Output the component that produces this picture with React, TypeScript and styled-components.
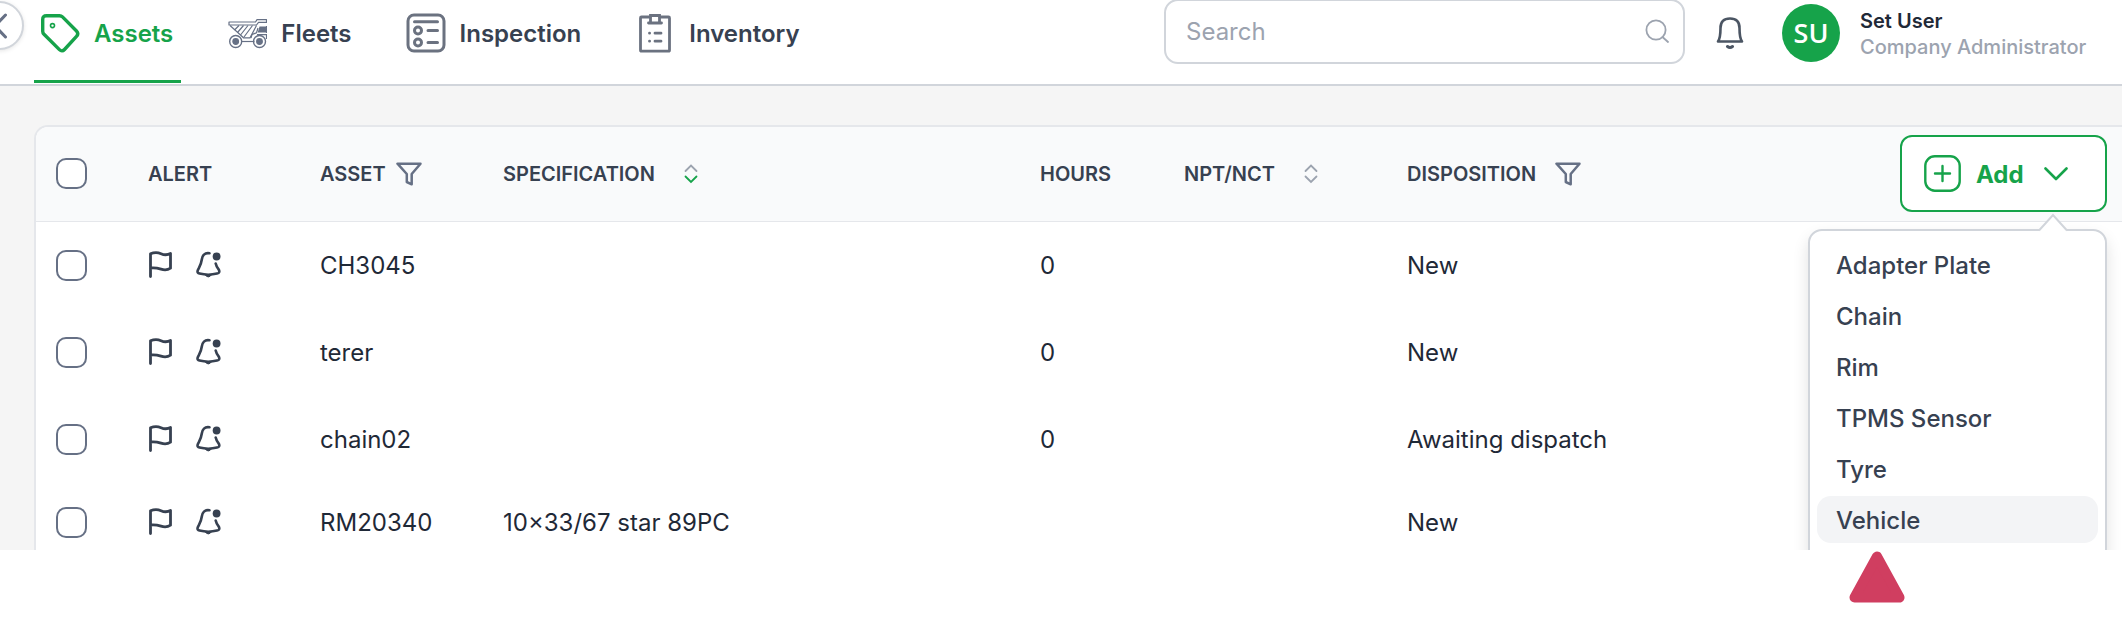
import React from "react";
import styled, { createGlobalStyle } from "styled-components";

const color = {
  green: "#16a34a",
  ink: "#1f2937",
  text: "#374151",
  icon: "#667085",
  muted: "#9ca3af",
  line: "#d1d5db",
  softLine: "#e5e7eb",
};

const GlobalStyle = createGlobalStyle`
  * { box-sizing: border-box; }
  body {
    margin: 0;
    background: #fff;
    color: ${color.ink};
    font-family: Inter, "Liberation Sans", sans-serif;
    font-size: 24px;
    line-height: 32px;
    overflow-x: hidden;
  }
  button, input { font: inherit; color: inherit; }
`;

/* ---------- top bar ---------- */

const TopBar = styled.header`
  position: relative;
  display: flex;
  align-items: flex-start;
  justify-content: space-between;
  height: 86px;
  padding: 0 31px 0 34px;
  border-bottom: 2px solid ${color.line};
  background: #fff;
`;

const BackButton = styled.button`
  position: absolute;
  top: 1px;
  left: -25px;
  width: 49px;
  height: 49px;
  padding: 0;
  display: grid;
  place-items: center;
  border: 2px solid ${color.line};
  border-radius: 50%;
  background: #fff;
  box-shadow: 0 1px 4px rgba(0, 0, 0, 0.1);
  svg { display: block; }
`;

const Nav = styled.nav`
  display: flex;
  gap: 40px;
`;

const Tab = styled.a<{ $active?: boolean }>`
  display: flex;
  align-items: center;
  gap: 14px;
  height: 83px;
  padding: 0 8px 14px 6px;
  border-bottom: 3px solid ${(p) => (p.$active ? color.green : "transparent")};
  color: ${(p) => (p.$active ? color.green : color.text)};
  font-weight: 600;
  text-decoration: none;
  svg { display: block; flex: none; }
  span { padding-top: 2px; }
`;

const Tools = styled.div`
  display: flex;
  align-items: center;
  height: 66px;
`;

const SearchBox = styled.label`
  display: flex;
  align-items: center;
  width: 521px;
  height: 65px;
  margin: -4px 31px 0 0;
  padding: 0 14px 0 20px;
  border: 2px solid ${color.line};
  border-radius: 14px;
  background: #fff;
`;

const SearchInput = styled.input`
  flex: 1;
  min-width: 0;
  padding: 1px 0 0;
  border: 0;
  outline: 0;
  background: transparent;
  &::placeholder { color: ${color.muted}; opacity: 1; }
`;

const IconButton = styled.button`
  display: inline-grid;
  place-items: center;
  padding: 0;
  border: 0;
  background: transparent;
  svg { display: block; }
`;

const Avatar = styled.div`
  display: grid;
  place-items: center;
  width: 58px;
  height: 58px;
  margin: 0 20px 0 38px;
  border-radius: 50%;
  background: ${color.green};
  color: #fff;
  font: 600 27px/32px "Open Sans", sans-serif;
`;

const UserText = styled.div`
  min-width: 231px;
  padding-top: 2px;
  font-size: 20px;
  line-height: 26px;
  font-weight: 500;
  color: ${color.muted};
  strong {
    display: block;
    font-weight: 600;
    color: ${color.ink};
  }
`;

/* ---------- asset table ---------- */

const Workspace = styled.main`
  padding: 39px 0 0 34px;
  background: #f5f5f5;
  overflow: hidden;
`;

const Card = styled.section`
  border: 2px solid ${color.softLine};
  border-width: 2px 0 0 2px;
  border-radius: 14px 0 0 0;
  background: #fff;
`;

const Table = styled.table`
  width: 100%;
  table-layout: fixed;
  border-spacing: 0;
`;

const Col = styled.col<{ $width?: number }>`
  width: ${(p) => (p.$width ? `${p.$width}px` : "auto")};
`;

const HeadCell = styled.th`
  height: 95px;
  padding: 0 0 1px;
  border-bottom: 1px solid ${color.softLine};
  background: #f9fafb;
  color: ${color.text};
  font-size: 20px;
  font-weight: 600;
  text-align: left;
  &:first-child {
    padding-left: 20px;
    border-radius: 12px 0 0 0;
  }
`;

const HeadLabel = styled.div<{ $gap?: number }>`
  display: flex;
  align-items: center;
  gap: ${(p) => p.$gap ?? 0}px;
`;

const Cell = styled.td`
  padding: 28px 0;
  line-height: 31px;
  vertical-align: top;
  &:first-child { padding-left: 20px; }
  tr:last-child > & {
    padding-top: 24px;
    padding-bottom: 12px;
  }
`;

const Checkbox = styled.input.attrs({ type: "checkbox" })`
  appearance: none;
  display: block;
  width: 31px;
  height: 31px;
  margin: 0;
  border: 2px solid ${color.icon};
  border-radius: 10px;
  background: #fff;
  &:checked { background: ${color.green}; }
`;

const Alerts = styled.div`
  display: flex;
  align-items: center;
  gap: 22px;
  height: 28px;
`;

/* ---------- add menu ---------- */

const AddWrap = styled.div`
  position: relative;
  width: 207px;
  margin: 0 15px 0 auto;
`;

const AddButton = styled.button`
  display: flex;
  align-items: center;
  width: 100%;
  height: 77px;
  padding: 0 22px;
  border: 2px solid ${color.green};
  border-radius: 12px;
  background: #fff;
  color: ${color.green};
  font-size: 24px;
  font-weight: 700;
  svg { display: block; }
  span { margin: 0 20px 0 15px; padding-top: 2px; }
`;

const Menu = styled.div`
  position: absolute;
  top: 94px;
  right: 0;
  width: 299px;
  padding: 10px 7px 24px;
  display: grid;
  gap: 4px;
  border: 2px solid ${color.line};
  border-radius: 14px;
  background: #fff;
  box-shadow: 0 8px 16px rgba(0, 0, 0, 0.12);
`;

const Notch = styled.svg`
  position: absolute;
  top: -18px;
  right: 36px;
`;

const MenuItem = styled.button<{ $active?: boolean }>`
  height: 47px;
  padding: 2px 19px 0;
  border: 0;
  border-radius: 14px;
  background: ${(p) => (p.$active ? "#f3f4f6" : "transparent")};
  color: ${color.text};
  font-size: 24px;
  font-weight: 500;
  text-align: left;
`;

const PointerRow = styled.div`
  display: flex;
  justify-content: flex-end;
  padding: 1px 217px 0 0;
`;

/* ---------- icons ---------- */

const TagIcon = () => (
  <svg width="40" height="40" viewBox="0 0 40 40" fill="none" stroke="currentColor">
    <path
      d="M6.500 2.700H19.500Q21.300 2.700 22.500 3.900L36.500 18Q39.200 20.700 36.500 23.400L24.500 36.500Q22 39.200 19.400 36.600L4 21.200Q2.700 19.900 2.700 18.200V6.500Q2.700 2.700 6.500 2.700Z"
      strokeWidth="3.400"
      strokeLinejoin="round"
    />
    <circle cx="12.500" cy="12.600" r="2" strokeWidth="1.600" />
  </svg>
);

const TruckIcon = () => (
  <svg width="40" height="40" viewBox="0 0 40 40" fill="none" stroke={color.icon} strokeWidth="1.200">
    <path d="M2 9H28.500L30 6.600H39.500V9.300H31.500L29.500 12H2Z" strokeLinejoin="round" />
    <path d="M3 12.500 13.500 22 16.500 24.800H23L29.500 12.500" />
    <path d="M12 12.500 7.500 17M16.500 12.500 10.500 19.500M21 12.500 13.500 22M25.500 12.500 17 24" />
    <path d="M33 14H38.500L39.500 19H31.500Z" fill={color.icon} />
    <path d="M31 15 29.500 19.800 25 21.500 24 25M30 21.700H39.500V26M39.500 13V20" />
    <path d="M14.500 28.500H27.500" />
    <circle cx="8.700" cy="28.500" r="6" strokeWidth="1.400" />
    <circle cx="8.700" cy="28.500" r="2.800" fill={color.icon} />
    <circle cx="32.500" cy="28.500" r="6" strokeWidth="1.400" />
    <circle cx="32.500" cy="28.500" r="2.800" fill={color.icon} />
  </svg>
);

const InspectionIcon = () => (
  <svg width="40" height="40" viewBox="0 0 40 40" fill="none" stroke="#6b7280" strokeWidth="3" strokeLinecap="round">
    <rect x="2" y="2" width="36" height="36" rx="6" />
    <path d="M8.500 8.700H31.500M22 17.500H31.500M22 29.500H31.500" />
    <circle cx="12" cy="17.500" r="3.500" />
    <circle cx="12" cy="29.500" r="3.500" />
  </svg>
);

const InventoryIcon = () => (
  <svg width="40" height="40" viewBox="0 0 40 40" fill="none" stroke="#6b7280" strokeWidth="2.800" strokeLinecap="round">
    <path d="M15 4H6.500Q5.500 4 5.500 5V37Q5.500 38.200 6.500 38.200H33.500Q34.500 38.200 34.500 37V5Q34.500 4 33.500 4H25" />
    <path d="M15.500 9V2.500H24.500V9M13.500 10H26.500" />
    <path d="M20 20.200H26M20 28.200H26M14.500 20.200H14.600M14.500 28.200H14.600" />
  </svg>
);

const SearchIcon = () => (
  <svg width="24" height="24" viewBox="0 0 24 24" fill="none" stroke={color.muted} strokeWidth="1.800" strokeLinecap="round">
    <circle cx="11" cy="11" r="9.600" />
    <path d="M17.500 18 23 23" />
  </svg>
);

const BellIcon = () => (
  <svg width="28" height="33" viewBox="0 0 28 33" fill="none" stroke="#4b5563" strokeLinecap="round">
    <path
      d="M2 24.500Q4.500 21 4.500 11Q4.500 1.500 14 1.500Q23.500 1.500 23.500 11Q23.500 21 26 24.500Z"
      strokeWidth="2.600"
      strokeLinejoin="round"
    />
    <path d="M11.500 29.500Q14 31.500 16.500 29.500" strokeWidth="3" />
  </svg>
);

const FilterIcon = () => (
  <svg width="26" height="24" viewBox="0 0 26 24" fill="none" stroke={color.icon} strokeWidth="2.500" strokeLinejoin="round">
    <path d="M1.500 1.700H24.500L15.700 12V22.300L10.800 20V12Z" />
  </svg>
);

const SortIcon = ({ descending }: { descending?: boolean }) => (
  <svg width="14" height="20" viewBox="0 0 14 20" fill="none" strokeWidth="1.800" strokeLinecap="round">
    <path d="M1.500 7 7 1.500 12.500 7" stroke={color.muted} />
    <path d="M1.500 12.500 7 18 12.500 12.500" stroke={descending ? color.green : color.muted} />
  </svg>
);

const FlagIcon = () => (
  <svg width="26" height="27" viewBox="0 0 26 27" fill="none" stroke={color.text} strokeWidth="2.800" strokeLinecap="round" strokeLinejoin="round">
    <path d="M2.500 25.500V2.800Q8 .500 13 2.700T22.500 2.500V17.200Q18.500 20 13 18.200T2.500 17" />
  </svg>
);

const AlarmIcon = () => (
  <svg width="26" height="27" viewBox="0 0 26 27" fill="none" stroke={color.text} strokeWidth="2.600" strokeLinecap="round" strokeLinejoin="round">
    <path d="M13.500 2.300C8.500 1.500 6.300 4.500 5.800 8.500C5.100 14 3 16.500 1.800 19.300C1 21.300 2 22.200 3.500 22.600C9 24 15.500 24 21 22.600C23.500 22 23.800 20.500 22.700 18.500C21.200 16.300 20.200 15 19.700 12.500" />
    <path d="M9 23.800Q12.300 28.300 15.600 23.800Z" fill={color.text} strokeWidth="1" />
    <circle cx="20.600" cy="5.500" r="3.900" fill={color.text} stroke="none" />
  </svg>
);

const PlusBoxIcon = () => (
  <svg width="37" height="37" viewBox="0 0 37 37" fill="none" stroke="currentColor" strokeWidth="2.400" strokeLinecap="round">
    <rect x="1.300" y="1.300" width="34.400" height="34.400" rx="9.500" />
    <path d="M11 18.500H26M18.500 11V26" />
  </svg>
);

const ChevronIcon = () => (
  <svg width="24" height="14" viewBox="0 0 24 14" fill="none" stroke="currentColor" strokeWidth="2.600" strokeLinecap="round" strokeLinejoin="round">
    <path d="M1.500 1.500 12 12 22.500 1.500" />
  </svg>
);

/* ---------- data ---------- */

const tabs = [
  { label: "Assets", icon: <TagIcon />, active: true },
  { label: "Fleets", icon: <TruckIcon /> },
  { label: "Inspection", icon: <InspectionIcon /> },
  { label: "Inventory", icon: <InventoryIcon /> },
];

const rows = [
  { asset: "CH3045", specification: "", hours: "0", disposition: "New" },
  { asset: "terer", specification: "", hours: "0", disposition: "New" },
  { asset: "chain02", specification: "", hours: "0", disposition: "Awaiting dispatch" },
  { asset: "RM20340", specification: "10×33/67 star 89PC", hours: "", disposition: "New" },
];

const assetTypes = ["Adapter Plate", "Chain", "Rim", "TPMS Sensor", "Tyre", "Vehicle"];

const columnWidths = [112, 172, 183, 537, 144, 223, undefined, 222];

export default function App() {
  return (
    <>
      <GlobalStyle />
      <TopBar>
        <BackButton aria-label="Collapse sidebar">
          <svg width="16" height="26" viewBox="0 0 16 26" fill="none" stroke={color.icon} strokeWidth="3" strokeLinecap="round">
            <path d="M13.500 2 3 13 13.500 24" />
          </svg>
        </BackButton>
        <Nav>
          {tabs.map((tab) => (
            <Tab key={tab.label} href="#" $active={tab.active}>
              {tab.icon}
              <span>{tab.label}</span>
            </Tab>
          ))}
        </Nav>
        <Tools>
          <SearchBox>
            <SearchInput placeholder="Search" aria-label="Search" />
            <SearchIcon />
          </SearchBox>
          <IconButton aria-label="Notifications">
            <BellIcon />
          </IconButton>
          <Avatar>SU</Avatar>
          <UserText>
            <strong>Set User</strong>
            Company Administrator
          </UserText>
        </Tools>
      </TopBar>

      <Workspace>
        <Card>
          <Table>
            <colgroup>
              {columnWidths.map((width, i) => (
                <Col key={i} $width={width} />
              ))}
            </colgroup>
            <thead>
              <tr>
                <HeadCell>
                  <Checkbox aria-label="Select all assets" />
                </HeadCell>
                <HeadCell>ALERT</HeadCell>
                <HeadCell>
                  <HeadLabel $gap={10}>
                    ASSET
                    <IconButton aria-label="Filter by asset">
                      <FilterIcon />
                    </IconButton>
                  </HeadLabel>
                </HeadCell>
                <HeadCell>
                  <HeadLabel $gap={29}>
                    SPECIFICATION
                    <IconButton aria-label="Sort by specification">
                      <SortIcon descending />
                    </IconButton>
                  </HeadLabel>
                </HeadCell>
                <HeadCell>HOURS</HeadCell>
                <HeadCell>
                  <HeadLabel $gap={29}>
                    NPT/NCT
                    <IconButton aria-label="Sort by NPT/NCT">
                      <SortIcon />
                    </IconButton>
                  </HeadLabel>
                </HeadCell>
                <HeadCell>
                  <HeadLabel $gap={19}>
                    DISPOSITION
                    <IconButton aria-label="Filter by disposition">
                      <FilterIcon />
                    </IconButton>
                  </HeadLabel>
                </HeadCell>
                <HeadCell>
                  <AddWrap>
                    <AddButton aria-haspopup="menu" aria-expanded="true">
                      <PlusBoxIcon />
                      <span>Add</span>
                      <ChevronIcon />
                    </AddButton>
                    <Menu role="menu">
                      <Notch width="32" height="20" viewBox="0 0 32 20">
                        <path d="M2 18 16 2 30 18V20H2Z" fill="#fff" />
                        <path d="M2 17.500 16 2 30 17.500" fill="none" stroke={color.line} strokeWidth="2" />
                      </Notch>
                      {assetTypes.map((type) => (
                        <MenuItem key={type} role="menuitem" $active={type === "Vehicle"}>
                          {type}
                        </MenuItem>
                      ))}
                    </Menu>
                  </AddWrap>
                </HeadCell>
              </tr>
            </thead>
            <tbody>
              {rows.map((row) => (
                <tr key={row.asset}>
                  <Cell>
                    <Checkbox aria-label={`Select ${row.asset}`} />
                  </Cell>
                  <Cell>
                    <Alerts>
                      <IconButton aria-label="Flag">
                        <FlagIcon />
                      </IconButton>
                      <IconButton aria-label="Alerts">
                        <AlarmIcon />
                      </IconButton>
                    </Alerts>
                  </Cell>
                  <Cell>{row.asset}</Cell>
                  <Cell>{row.specification}</Cell>
                  <Cell>{row.hours}</Cell>
                  <Cell />
                  <Cell>{row.disposition}</Cell>
                  <Cell />
                </tr>
              ))}
            </tbody>
          </Table>
        </Card>
      </Workspace>

      <PointerRow>
        <svg width="56" height="52" viewBox="0 0 56 52" aria-hidden="true">
          <path d="M28 5.500 50.500 46.500H5.500Z" fill="#d03e60" stroke="#d03e60" strokeWidth="10" strokeLinejoin="round" />
        </svg>
      </PointerRow>
    </>
  );
}
